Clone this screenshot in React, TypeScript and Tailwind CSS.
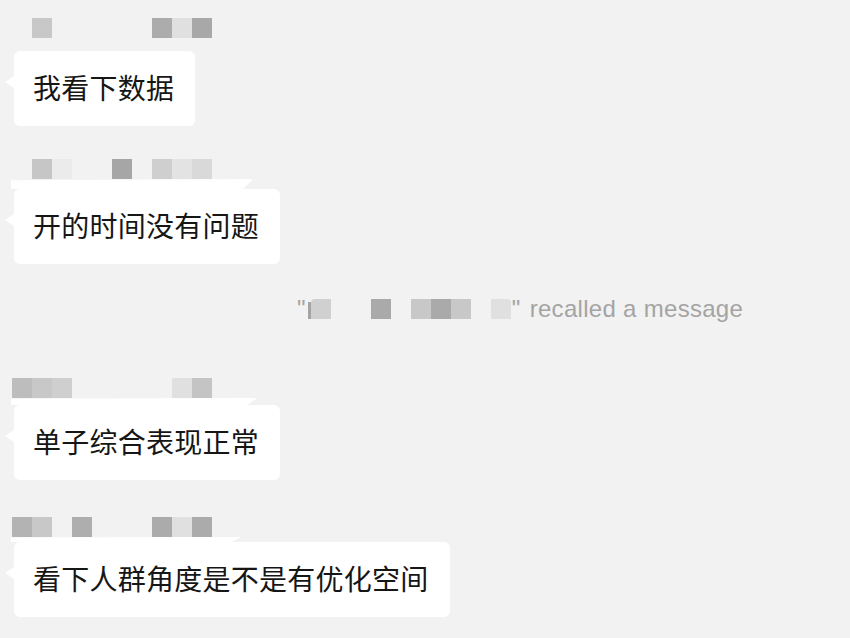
import React from "react";

type Msg = {
  name: string[];
  text: string;
  gap: string;
  strip?: string;
  mt: string;
};

// each name is 10 cells of 20px, starting at x=12 ("" = empty)
const messages: Msg[] = [
  {
    name: ["", "#c8c8c8", "", "", "", "", "", "#acacac", "#e0e0e0", "#a8a8a8"],
    text: "我看下数据",
    gap: "h-[13px]",
    mt: "mt-[18px]",
  },
  {
    name: ["", "#c6c6c6", "#ebebeb", "", "", "#a6a6a6", "", "#cfcfcf", "#e3e3e3", "#d9d9d9"],
    text: "开的时间没有问题",
    gap: "h-[10px]",
    strip: "w-[242px]",
    mt: "mt-[33px]",
  },
];

const later: Msg[] = [
  {
    name: ["#bdbdbd", "#c8c8c8", "#cfcfcf", "", "", "", "", "", "#e0e0e0", "#c4c4c4"],
    text: "单子综合表现正常",
    gap: "h-[7px]",
    strip: "w-[246px]",
    mt: "mt-[59px]",
  },
  {
    name: ["#b3b3b3", "#c8c8c8", "", "#aeaeae", "", "", "", "#ababab", "#e0e0e0", "#ababab"],
    text: "看下人群角度是不是有优化空间",
    gap: "h-[5px]",
    strip: "w-[230px]",
    mt: "mt-[37px]",
  },
];

function NameRow({ cells }: { cells: string[] }) {
  return (
    <div className="flex pl-[12px]">
      {cells.map((c, i) => (
        <div key={i} className="w-5 h-5" style={{ backgroundColor: c || "transparent" }} />
      ))}
    </div>
  );
}

function Message({ m }: { m: Msg }) {
  return (
    <div className={m.mt}>
      <NameRow cells={m.name} />
      {m.strip ? (
        <div
          className={`${m.gap} ${m.strip} ml-[11px] bg-white [clip-path:polygon(0_12%,100%_0,96%_100%,0_100%)]`}
        />
      ) : (
        <div className={m.gap} />
      )}
      <div className="relative ml-[14px] inline-flex h-[75px] items-center rounded-[6px] bg-white pb-[4px] pl-[19px] pr-[21px]">
        <div className="absolute left-[-9px] top-[25px] h-0 w-0 border-y-[6px] border-r-[9px] border-y-transparent border-r-white" />
        <span className="text-[28px] leading-none tracking-[0.25px] text-[#161616] whitespace-nowrap">
          {m.text}
        </span>
      </div>
    </div>
  );
}

export default function App() {
  return (
    <div
      className="w-[850px] h-[638px] overflow-hidden bg-[#f2f2f2] flex flex-col"
      style={{ fontFamily: '"Noto Sans CJK SC", "Noto Sans", sans-serif' }}
    >
      {messages.map((m, i) => (
        <Message key={i} m={m} />
      ))}

      {/* recalled notice */}
      <div
        className="mt-[35px] flex h-5 items-center pl-[297px] text-[24px] leading-none tracking-[0.3px] text-[#a4a4a4]"
        style={{ fontFamily: '"Liberation Sans", Arial, sans-serif' }}
      >
        <span>"</span>
        <div className="ml-[2px] mt-[2px] h-[17px] w-[3px] bg-[#a4a4a4]" />
        <div className="h-5 w-5 rounded-tl-[4px] bg-[#d0d0d0]" />
        <div className="ml-[40px] h-5 w-5 bg-[#aaaaaa]" />
        <div className="ml-[20px] h-5 w-5 bg-[#c8c8c8]" />
        <div className="h-5 w-5 bg-[#aaaaaa]" />
        <div className="h-5 w-5 bg-[#c8c8c8]" />
        <div className="ml-[20px] h-5 w-5 rounded-tr-[4px] bg-[#e0e0e0]" />
        <span className="ml-[1px]">"</span>
        <span className="ml-[9px]">recalled a message</span>
      </div>

      {later.map((m, i) => (
        <Message key={i} m={m} />
      ))}
    </div>
  );
}
